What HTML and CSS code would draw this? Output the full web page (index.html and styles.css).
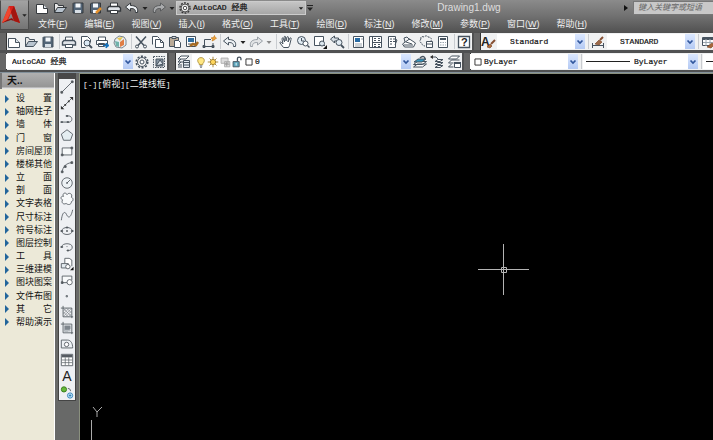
FILE: index.html
```html
<!DOCTYPE html>
<html lang="zh-CN">
<head>
<meta charset="utf-8">
<title>Drawing1.dwg</title>
<link rel="stylesheet" href="styles.css">
</head>
<body>
<svg class="sprite" aria-hidden="true">
  <symbol id="new" viewBox="0 0 16 16"><path d="M2.500 4.500h7l4 4v5h-11z" fill="#fff"/><path d="M9.500 4.500v4h4" fill="#dde3ea"/></symbol>
  <symbol id="open" viewBox="0 0 16 16"><path d="M2.500 12.500v-9h3l1 2h5v2" fill="#e8e8e8"/><path d="M2.500 12.500l3-5h9l-4 5z" fill="#b9c4cf"/></symbol>
  <symbol id="save" viewBox="0 0 16 16"><path d="M3.500 3h9.500v10h-10v-9.500z" fill="#536577"/><path d="M5.500 3.500h5v4h-5z" fill="#f4f7fa" stroke="none"/><path d="M5 10h6v3H5z" fill="#d7dee5" stroke="none"/></symbol>
  <symbol id="saveas" viewBox="0 0 16 16"><path d="M3.500 3h9v10h-10v-9z" fill="#536577"/><path d="M5 3.500h5v4h-5zM5 10h4v3H5z" fill="#f4f7fa" stroke="none"/><path d="M8 13l5-5" stroke="#e4902b" stroke-width="2.500"/></symbol>
  <symbol id="print" viewBox="0 0 16 16"><path d="M4.500 7v-4h7v4M4.500 10v3.500h7V10" fill="#fff"/><path d="M3 6.500h10l1.500 1.500v3h-13v-3z" fill="#dfe3e8" stroke-width="1.400"/><path d="M4.500 10.500h7v3h-7z" fill="#fff"/></symbol>
  <symbol id="preview" viewBox="0 0 16 16"><path d="M3.500 13.500v-11h6l3 3v3M3.500 13.500h4" fill="#fff"/><circle cx="9" cy="9" r="3" fill="#dceaf5"/><path d="M11 11l3 3" stroke-width="2"/></symbol>
  <symbol id="publish" viewBox="0 0 16 16"><path d="M3.500 6v-3h7v3M1.500 6.500h11v4h-11zM3.500 9.500h6v3h-6z" fill="#fff"/><path d="M8 11.500h4m-1-2.500l3 2.500-3 2.500z" fill="#1673bd" stroke="#1673bd"/></symbol>
  <symbol id="cube" viewBox="0 0 16 16"><path d="M7 2l5 1 2 3v5l-4 3-6-1-2-4 1-4z" fill="#e7eef3" stroke="#7b858d"/><path d="M8 8l4-3v6l-4 2z" fill="#df7d45" stroke="none"/><path d="M3 7l4 1v5l-3-1z" fill="#71b2ab" stroke="none"/><path d="M5 4l6-1-3 4z" fill="#e7c54f" stroke="none"/></symbol>
  <symbol id="cut" viewBox="0 0 16 16"><path d="M3 2.500l8 9M13 2.500l-8 9" stroke-width="1.500"/><circle cx="4" cy="12.500" r="1.500"/><circle cx="12" cy="12.500" r="1.500"/></symbol>
  <symbol id="copy" viewBox="0 0 16 16"><path d="M2.500 10.500v-8h5l2 2" fill="#fff"/><path d="M5.500 5.500h5l3 3v5h-8z" fill="#fff"/><path d="M10.500 5.500v3h3"/></symbol>
  <symbol id="paste" viewBox="0 0 16 16"><path d="M2.500 3.500h9v9h-9z" fill="#b9aa97"/><path d="M5 2.500h4v2H5z" fill="#ddd"/><path d="M7.500 6.500h4l2 2v5h-6z" fill="#fff"/></symbol>
  <symbol id="match" viewBox="0 0 16 16"><path d="M2.500 2.500h9v10h-9z" fill="#fff"/><path d="M4 4h6v4H4z" fill="#326f9f" stroke="none"/><path d="M4 10h4"/><path d="M6 12l3-2 3 1 2-3" stroke="#a76b22" stroke-width="2.500"/></symbol>
  <symbol id="block" viewBox="0 0 16 16"><path d="M10 5.500H3.500v6M3 12.500h9V9"/><path d="M11 7l1-2-2-1 2.500-.5 1-2 .5 2 1.500.5-1.500 1.500z" fill="#efa43a" stroke="#c77c1e" stroke-width=".7"/><path d="M2 11.500h2v2H2zM11 11.500h2v2h-2z" fill="#555"/></symbol>
  <symbol id="undo" viewBox="0 0 16 16"><path d="M1.500 7l5-4v2.500c5 0 8 2 7 7h-2c0-3-1-4-5-4V11z" fill="#eef2f5"/></symbol>
  <symbol id="redo" viewBox="0 0 16 16"><path d="M14.500 7l-5-4v2.500c-5 0-8 2-7 7h2c0-3 1-4 5-4V11z" fill="#d5d8dc"/></symbol>
  <symbol id="caret" viewBox="0 0 8 16"><path d="M1.500 7h5L4 10z" fill="currentColor" stroke="none"/></symbol>
  <symbol id="morecaret" viewBox="0 0 8 16"><path d="M1 5h6v1H1zM1 7.500h6L4 11z" fill="currentColor" stroke="none"/></symbol>
  <symbol id="pan" viewBox="0 0 16 16"><path d="M5.500 13.500L2 9c0-2 1-1 3 1L4 5c0-1.500 1-1.500 1.500 0l1 3-.500-5c.5-1 1.500-1 1.500 0L8 7l1-4c1-1 1.500 0 1.500 1L10 8l2-4c1-.5 1.500 0 1 1.500l-1.500 6-1 2z" fill="#fff"/></symbol>
  <symbol id="zoomrt" viewBox="0 0 16 16"><circle cx="6.500" cy="6.500" r="4" fill="#e3edf5"/><path d="M6.500 4v3h2.500"/><circle cx="10.500" cy="9.500" r="2.500" fill="#fff"/><path d="M12.500 11.500l2 2" stroke-width="1.500"/></symbol>
  <symbol id="zoomwin" viewBox="0 0 16 16"><path d="M2.500 2.500h9v9h-9z" fill="#fff"/><circle cx="10" cy="9.500" r="2.500" fill="#dce7ef"/><path d="M12 11l1 1"/><path d="M15 11v4h-4z" fill="#111" stroke="none"/></symbol>
  <symbol id="zoomprev" viewBox="0 0 16 16"><path d="M1.500 5l4-3v2h4v3h-4v2z" fill="#d6dde3"/><circle cx="10" cy="8.500" r="3" fill="#e3edf5"/><path d="M12 11l3 3" stroke-width="1.800"/></symbol>
  <symbol id="props" viewBox="0 0 16 16"><path d="M3.500 2.500h10v11h-10z" fill="#fff"/><path d="M5 4h5v4H5z" fill="#286ba4" stroke="none"/><path d="M11 5h2M5 10h7M5 12h7" stroke="#9aa5ae"/></symbol>
  <symbol id="center" viewBox="0 0 16 16"><path d="M2.500 2.500h12v11h-12z" fill="#fff"/><path d="M5.500 2.500v11M5 8.500h9M7 4.500h2m2 0h2M7 6.500h2m2 0h2M7 10.500h2m2 0h2M7 12.500h2m2 0h2"/></symbol>
  <symbol id="palette" viewBox="0 0 16 16"><path d="M4.500 2.500h7v11h-7z" fill="#fff"/><path d="M6 5h2m1 0h2M6 7.500h2m1 0h2M6 10h2m3-5l2 1-2 5"/></symbol>
  <symbol id="sheet" viewBox="0 0 16 16"><path d="M1.500 10l7-5 6 4-2 4h-9z" fill="#fff"/><path d="M4 8l-1-4 3-1 3 3M3 11h9M5 8l6 2"/></symbol>
  <symbol id="markup" viewBox="0 0 16 16"><path d="M3 5c-1-2 1-3 3-2 2-2 4-1 4 0 3 0 4 2 3 4M3 5c-2 2-1 4 1 4 0 2 1 3 3 3" stroke-dasharray="2 1"/><path d="M8.500 7.500h6v6h-6z" fill="#fff"/><path d="M8 10h6"/></symbol>
  <symbol id="calc" viewBox="0 0 16 16"><path d="M3.500 2.500h9v11h-9z" fill="#fff"/><path d="M5 5h6" stroke-width="2"/><path d="M5 8.500h6M5 11h6" stroke="#9aa5ae" stroke-dasharray="1.500 1"/></symbol>
  <symbol id="help" viewBox="0 0 16 16"><path d="M2.500 2.500h11v11h-11z" fill="#fff" stroke-width="1.300"/><text x="5" y="12" class="qmark">?</text></symbol>
  <symbol id="textstyle" viewBox="0 0 16 16"><text x="1" y="12" class="glyph">A</text><path d="M7 13l3-3 2 2-2 2z" fill="#ad6c3d" stroke="#75401d" stroke-width=".6"/><path d="M11 10l4-4" stroke="#865033" stroke-width="2"/></symbol>
  <symbol id="dimstyle" viewBox="0 0 16 16"><path d="M2.500 9v5m11-5v5M3 11.500h11"/><path d="M5 10l4-4 3 2-3 3z" fill="#9b694a" stroke="#75401d" stroke-width=".6"/><path d="M10 6l3-3" stroke="#865033" stroke-width="2"/></symbol>
  <symbol id="tablestyle" viewBox="0 0 16 16"><path d="M2.500 3.500h11v8h-11z" fill="#fff"/><path d="M3 5h10" stroke-width="2"/><path d="M6 5v7M10 5v7M3 8.500h10" stroke="#9aa5ae"/><path d="M7 13l5-4 2 2-3 3z" fill="#a9663b" stroke="#75401d" stroke-width=".6"/></symbol>
  <symbol id="gear" viewBox="0 0 16 16"><circle cx="8" cy="8" r="5.800" stroke-width="1.500" stroke-dasharray="2.100 1.544"/><circle cx="8" cy="8" r="4.500" fill="#f1f1f1"/><circle cx="8" cy="8" r="2" fill="#fff"/></symbol>
  <symbol id="workspace" viewBox="0 0 16 16"><path d="M2.500 2.500h11v11h-11z" stroke-dasharray="1.500 1"/><path d="M5 5h7v7H5z" fill="#8795a2"/><path d="M5 12l4-6 3 4z" fill="#dce3e9"/></symbol>
  <symbol id="layers" viewBox="0 0 16 16"><path d="M3 5l3-3h8l-3 3zM3 8l3-3M3 8h5M3 11l3-3M3 11h4M3 13h4" fill="#fff"/><path d="M8.500 6.500h6v7h-6z" fill="#e4ebf1"/><path d="M9 8.500h5M9 11h5"/></symbol>
  <symbol id="layerstate" viewBox="0 0 16 16"><path d="M2.500 5l3-3h8l-3 3zM2.500 9l3-3h8M2.500 9h5M2.500 13l3-3M2.500 13h5" fill="#fff"/><path d="M8.500 8.500h6v5h-6z" fill="#fff"/><path d="M8 9h7" stroke-width="2"/></symbol>
  <symbol id="layercur" viewBox="0 0 16 16"><path d="M1.500 13l4-3h9l-4 3zM1.500 10.500l4-3h9l-4 3z" fill="#fff"/><path d="M2 8l4-3h8l-4 3z" fill="#3395bd"/><path d="M8 4c3-3 5-1 5 1" stroke-width="1.500"/></symbol>
  <symbol id="layerprev" viewBox="0 0 16 16"><path d="M6 7.500l3-2h5l-3 2zM6 10.500l3-2h5l-3 2zM6 13.500l3-2h5l-3 2z" fill="#fff"/><path d="M2 3h5l2 2"/><path d="M1 3l3-2v4z" fill="#333" stroke="none"/></symbol>
  <symbol id="bulb" viewBox="0 0 12 16"><path d="M4 10C1 7 2 3 6 3s5 4 2 7v1H4z" fill="#ffe783" stroke="#a98b36"/><path d="M4.500 12.500h3M5 14h2"/></symbol>
  <symbol id="sun" viewBox="0 0 12 16"><path d="M6 2v12M0 8h12M2 4l8 8M10 4l-8 8" stroke="#9d7c2b"/><circle cx="6" cy="8" r="3" fill="#ffd65c" stroke="#9d7c2b"/></symbol>
  <symbol id="vpfreeze" viewBox="0 0 12 16"><path d="M1.500 3.500h8v6h-8zM5.500 7.500h6v6h-6z" fill="#ddd" stroke="#aaa"/><path d="M8 8v5M6 10.500h5" stroke="#999"/></symbol>
  <symbol id="lock" viewBox="0 0 12 16"><path d="M6.500 7V4c0-2 4-2 4 0v2" stroke-width="1.500"/><path d="M1.500 7.500h7v6h-7z" fill="#5da6bc"/><path d="M5 9v3" stroke="#fff"/></symbol>
  <symbol id="swatch" viewBox="0 0 12 16"><path d="M2.500 4.500h7v7h-7z" fill="#fff" stroke="#222"/></symbol>
  <symbol id="chev" viewBox="0 0 10 14"><path d="M2.500 6L5 8.500 7.500 6" stroke="#31579d" stroke-width="1.700"/></symbol>

  <symbol id="line" viewBox="0 0 16 16"><path d="M2 14L14 2"/><path d="M1 13h2v2H1zM13 1h2v2h-2z" fill="#555"/></symbol>
  <symbol id="xline" viewBox="0 0 16 16"><path d="M2 14L14 2"/><path d="M1 15v-4l4 4zM15 1v4l-4-4zM5 9h2v2H5zM9 5h2v2H9z" fill="#333" stroke="none"/></symbol>
  <symbol id="pline" viewBox="0 0 16 16"><path d="M2 11.500h9c4-1 3-7-1-7H8"/><path d="M1 11h2v1H1zM8 11h2v1H8zM7 4h2v1H7z" fill="#555"/></symbol>
  <symbol id="polygon" viewBox="0 0 16 16"><path d="M8 2l6.500 5-2.500 7H4L1.500 7z" fill="#e4edf1"/></symbol>
  <symbol id="rect" viewBox="0 0 16 16"><path d="M2.500 4.500h11v8h-11z" fill="#f7f9fa"/><path d="M1.500 11.500h2v2h-2zM12.500 3.500h2v2h-2z" fill="#555"/></symbol>
  <symbol id="arc" viewBox="0 0 16 16"><path d="M2.500 13.500C3 8 7 3.500 13.500 3"/><path d="M1.500 12.500h2v2h-2zM5 6.500h2v2H5zM12.500 2h2v2h-2z" fill="#555"/></symbol>
  <symbol id="circle" viewBox="0 0 16 16"><circle cx="8" cy="8" r="6" fill="#edf2f5"/><path d="M8 8l4-4M7.500 7.500h1v1h-1z"/></symbol>
  <symbol id="cloud" viewBox="0 0 16 16"><path d="M4 5C2 1 7 0 8 3c2-3 7-1 5 3 3 1 2 5 0 5 0 4-4 4-6 2-3 2-6-1-4-4C0 8 1 4 4 5z" fill="#f8fafb"/></symbol>
  <symbol id="spline" viewBox="0 0 16 16"><path d="M1.500 14C3 3 6 4 7.500 7.500S12 13 14.500 2"/></symbol>
  <symbol id="ellipse" viewBox="0 0 16 16"><ellipse cx="8" cy="8" rx="6" ry="4"/><path d="M1 7.500h2v1H1zM13 7.500h2v1h-2zM7 3.500h2v1H7zM7.500 7.500h1v1h-1z" fill="#555"/></symbol>
  <symbol id="earc" viewBox="0 0 16 16"><path d="M2 8c0-5 12-5 12 0 0 3-2 4-5 4"/><path d="M1 7.500h2v1H1zM8 11.500h2v1H8zM7.500 7.500h1" fill="#555"/></symbol>
  <symbol id="insert" viewBox="0 0 16 16"><path d="M5.500 7V1.500h5l3 2v7" fill="#fff"/><path d="M1.500 7.500h8v5h-8z" fill="#e4ebf0"/><circle cx="9" cy="11" r="2.500" fill="#fff"/><path d="M15.500 11v4h-4z" fill="#111" stroke="none"/></symbol>
  <symbol id="mkblock" viewBox="0 0 16 16"><path d="M2.500 11V3.500h11V8M2.500 11h6" fill="#f8fafb"/><circle cx="11" cy="10.500" r="3" fill="#fff"/><path d="M1.500 10h2v2h-2z" fill="#555"/></symbol>
  <symbol id="point" viewBox="0 0 16 16"><path d="M7 7.500h1.500V9H7z"/></symbol>
  <symbol id="hatch" viewBox="0 0 16 16"><path d="M3.500 1v12.500H15M1 3.500h12.500V15"/><path d="M4 7l3-3M4 10l6-6M4 13l9-9M7 13l6-6M10 13l3-3M4 4l9 9M4 8l5 5M8 4l5 5" stroke-width=".5"/></symbol>
  <symbol id="gradient" viewBox="0 0 16 16"><path d="M3.500 1v12.500H15M1 3.500h12.500V15"/><path d="M5 5h7v4l-3 3H5z" fill="#7e868d" stroke="none"/><path d="M5 10h7v2H5z" fill="#b9bfc4" stroke="none"/></symbol>
  <symbol id="region" viewBox="0 0 16 16"><path d="M1.500 3.500h7c4 0 6 4 6 9h-13z" fill="#edf1f4"/><circle cx="7.500" cy="8.500" r="2.500" fill="#fff"/></symbol>
  <symbol id="table" viewBox="0 0 16 16"><path d="M1.500 1.500h13v13h-13z" fill="#fff"/><path d="M2 3.500h12" stroke-width="3"/><path d="M6 5v9M10 5v9M2 8h12M2 11h12" stroke-width=".8"/></symbol>
  <symbol id="mtext" viewBox="0 0 16 16"><text x="2.500" y="14" class="big">A</text></symbol>
  <symbol id="addsel" viewBox="0 0 16 16"><circle cx="4.500" cy="5" r="3" fill="#65b83a" stroke="#35771d"/><path d="M9 4c2 0 3 1 3 3"/><circle cx="11.500" cy="12" r="3" fill="#c8e5f8" stroke="#277eb8"/><path d="M10 12h3M11.500 10.500v3" stroke="#277eb8"/></symbol>
</svg>

<header class="header">
  <button class="app" aria-label="应用程序菜单">
    <svg class="logo" viewBox="0 0 20 24"><path d="M8 3h5l6 17-6-2-3-8-3 7-6 3z" fill="#d9201a"/><path d="M8 3l2 6-4 8-5 3z" fill="#f0472f"/><path d="M13 3l6 17-6-2-3-9z" fill="#a3160f"/><path d="M6 17l5-2 2 3-3-1-9 3z" fill="#8f0f0b"/></svg>
    <svg class="caret"><use href="#caret"/></svg>
  </button>
  <div class="head-main">
    <div class="title-row">
      <div class="quick">
        <button aria-label="新建"><svg><use href="#new"/></svg></button>
        <button aria-label="打开"><svg><use href="#open"/></svg></button>
        <button aria-label="保存"><svg><use href="#save"/></svg></button>
        <button aria-label="另存为"><svg><use href="#saveas"/></svg></button>
        <button aria-label="打印"><svg><use href="#print"/></svg></button>
        <button aria-label="放弃"><svg><use href="#undo"/></svg></button>
        <button class="drop" aria-label="放弃列表"><svg><use href="#caret"/></svg></button>
        <button class="dim" aria-label="重做"><svg><use href="#redo"/></svg></button>
        <button class="drop" aria-label="重做列表"><svg><use href="#caret"/></svg></button>
      </div>
      <div class="combo space">
        <svg><use href="#gear"/></svg>
        <select aria-label="工作空间"><option>AutoCAD 经典</option></select>
        <svg class="caret"><use href="#caret"/></svg>
      </div>
      <button class="drop" aria-label="自定义快速访问工具栏"><svg><use href="#morecaret"/></svg></button>
      <h1>Drawing1.dwg</h1>
      <span class="play"></span>
      <input class="search" type="search" aria-label="搜索" placeholder="键入关键字或短语">
    </div>
    <nav class="menu">
      <a href="#">文件(<u>F</u>)</a><a href="#">编辑(<u>E</u>)</a><a href="#">视图(<u>V</u>)</a><a href="#">插入(<u>I</u>)</a><a href="#">格式(<u>O</u>)</a><a href="#">工具(<u>T</u>)</a><a href="#">绘图(<u>D</u>)</a><a href="#">标注(<u>N</u>)</a><a href="#">修改(<u>M</u>)</a><a href="#">参数(<u>P</u>)</a><a href="#">窗口(<u>W</u>)</a><a href="#">帮助(<u>H</u>)</a>
    </nav>
  </div>
</header>

<div class="bars">
  <div class="bar-row">
    <div class="bar">
      <button aria-label="新建"><svg><use href="#new"/></svg></button>
      <button aria-label="打开"><svg><use href="#open"/></svg></button>
      <button aria-label="保存"><svg><use href="#save"/></svg></button>
      <i class="sep"></i>
      <button aria-label="打印"><svg><use href="#print"/></svg></button>
      <button aria-label="打印预览"><svg><use href="#preview"/></svg></button>
      <button aria-label="发布"><svg><use href="#publish"/></svg></button>
      <button aria-label="三维打印"><svg><use href="#cube"/></svg></button>
      <i class="sep"></i>
      <button aria-label="剪切"><svg><use href="#cut"/></svg></button>
      <button aria-label="复制"><svg><use href="#copy"/></svg></button>
      <button aria-label="粘贴"><svg><use href="#paste"/></svg></button>
      <button aria-label="特性匹配"><svg><use href="#match"/></svg></button>
      <button aria-label="块编辑器"><svg><use href="#block"/></svg></button>
      <i class="sep"></i>
      <button aria-label="放弃"><svg><use href="#undo"/></svg></button>
      <button class="drop" aria-label="放弃列表"><svg><use href="#caret"/></svg></button>
      <button class="dim" aria-label="重做"><svg><use href="#redo"/></svg></button>
      <button class="drop dim" aria-label="重做列表"><svg><use href="#caret"/></svg></button>
      <i class="sep"></i>
      <button aria-label="平移"><svg><use href="#pan"/></svg></button>
      <button aria-label="实时缩放"><svg><use href="#zoomrt"/></svg></button>
      <button aria-label="窗口缩放"><svg><use href="#zoomwin"/></svg></button>
      <button aria-label="缩放上一个"><svg><use href="#zoomprev"/></svg></button>
      <i class="sep"></i>
      <button aria-label="特性"><svg><use href="#props"/></svg></button>
      <button aria-label="设计中心"><svg><use href="#center"/></svg></button>
      <button aria-label="工具选项板"><svg><use href="#palette"/></svg></button>
      <button aria-label="图纸集"><svg><use href="#sheet"/></svg></button>
      <button aria-label="标记集"><svg><use href="#markup"/></svg></button>
      <button aria-label="计算器"><svg><use href="#calc"/></svg></button>
      <i class="sep"></i>
      <button aria-label="帮助"><svg><use href="#help"/></svg></button>
    </div>
    <div class="bar fill">
      <button aria-label="文字样式"><svg><use href="#textstyle"/></svg></button>
      <div class="combo style"><select aria-label="文字样式"><option>Standard</option></select><svg class="arrow"><use href="#chev"/></svg></div>
      <i class="sep"></i>
      <button aria-label="标注样式"><svg><use href="#dimstyle"/></svg></button>
      <div class="combo style"><select aria-label="标注样式"><option>STANDARD</option></select><svg class="arrow"><use href="#chev"/></svg></div>
      <i class="sep"></i>
      <button aria-label="表格样式"><svg><use href="#tablestyle"/></svg></button>
    </div>
  </div>
  <div class="bar-row">
    <div class="bar">
      <div class="combo workspace"><select aria-label="工作空间"><option>AutoCAD 经典</option></select><svg class="arrow"><use href="#chev"/></svg></div>
      <button aria-label="工作空间设置"><svg><use href="#gear"/></svg></button>
      <button aria-label="我的工作空间"><svg><use href="#workspace"/></svg></button>
    </div>
    <div class="bar">
      <button aria-label="图层特性"><svg><use href="#layers"/></svg></button>
      <div class="combo layer">
        <svg class="mini"><use href="#bulb"/></svg><svg class="mini"><use href="#sun"/></svg><svg class="mini"><use href="#vpfreeze"/></svg><svg class="mini"><use href="#lock"/></svg><svg class="mini"><use href="#swatch"/></svg>
        <select aria-label="图层"><option>0</option></select><svg class="arrow"><use href="#chev"/></svg>
      </div>
      <button aria-label="置为当前图层"><svg><use href="#layercur"/></svg></button>
      <button aria-label="上一个图层"><svg><use href="#layerprev"/></svg></button>
      <button aria-label="图层状态"><svg><use href="#layerstate"/></svg></button>
    </div>
    <div class="bar fill">
      <div class="combo color"><svg class="mini"><use href="#swatch"/></svg><select aria-label="颜色"><option>ByLayer</option></select><svg class="arrow"><use href="#chev"/></svg></div>
      <i class="sep"></i>
      <div class="combo ltype"><span class="rule"></span><select aria-label="线型"><option>ByLayer</option></select><svg class="arrow"><use href="#chev"/></svg></div>
      <i class="sep"></i>
      <div class="combo weight"><span class="rule"></span></div>
    </div>
  </div>
</div>

<main class="work">
  <aside class="side">
    <h2>天..</h2>
    <ul>
      <li><a href="#">设 置</a></li><li><a href="#">轴网柱子</a></li><li><a href="#">墙 体</a></li><li><a href="#">门 窗</a></li><li><a href="#">房间屋顶</a></li><li><a href="#">楼梯其他</a></li><li><a href="#">立 面</a></li><li><a href="#">剖 面</a></li><li><a href="#">文字表格</a></li><li><a href="#">尺寸标注</a></li><li><a href="#">符号标注</a></li><li><a href="#">图层控制</a></li><li><a href="#">工 具</a></li><li><a href="#">三维建模</a></li><li><a href="#">图块图案</a></li><li><a href="#">文件布图</a></li><li><a href="#">其 它</a></li><li><a href="#">帮助演示</a></li>
    </ul>
  </aside>
  <div class="dock">
    <div class="draw">
      <button aria-label="直线"><svg><use href="#line"/></svg></button>
      <button aria-label="构造线"><svg><use href="#xline"/></svg></button>
      <button aria-label="多段线"><svg><use href="#pline"/></svg></button>
      <button aria-label="正多边形"><svg><use href="#polygon"/></svg></button>
      <button aria-label="矩形"><svg><use href="#rect"/></svg></button>
      <button aria-label="圆弧"><svg><use href="#arc"/></svg></button>
      <button aria-label="圆"><svg><use href="#circle"/></svg></button>
      <button aria-label="修订云线"><svg><use href="#cloud"/></svg></button>
      <button aria-label="样条曲线"><svg><use href="#spline"/></svg></button>
      <button aria-label="椭圆"><svg><use href="#ellipse"/></svg></button>
      <button aria-label="椭圆弧"><svg><use href="#earc"/></svg></button>
      <button aria-label="插入块"><svg><use href="#insert"/></svg></button>
      <button aria-label="创建块"><svg><use href="#mkblock"/></svg></button>
      <button aria-label="点"><svg><use href="#point"/></svg></button>
      <button aria-label="图案填充"><svg><use href="#hatch"/></svg></button>
      <button aria-label="渐变色"><svg><use href="#gradient"/></svg></button>
      <button aria-label="面域"><svg><use href="#region"/></svg></button>
      <button aria-label="表格"><svg><use href="#table"/></svg></button>
      <button aria-label="多行文字"><svg><use href="#mtext"/></svg></button>
      <button aria-label="添加选定对象"><svg><use href="#addsel"/></svg></button>
    </div>
  </div>
  <section class="canvas" aria-label="绘图区">
    <p class="view">[-][<span>俯视</span>][<span>二维线框</span>]</p>
    <svg class="cross" viewBox="0 0 51 51"><path d="M25.500 0v51M0 25.500h51"/><path d="M23.500 23.500h5v5h-5z"/></svg>
    <svg class="ucs" viewBox="0 0 14 36"><path d="M3 3l4 5 5-5M7 8v5M1.500 16v20"/></svg>
  </section>
</main>
</body>
</html>
```
FILE: styles.css
```css
* { box-sizing: border-box; }
html, body { height: 100%; }
body {
  margin: 0;
  display: flex;
  flex-direction: column;
  min-height: 100vh;
  overflow: hidden;
  background: #58595a;
  font-family: "Liberation Sans", "Noto Sans CJK SC", sans-serif;
  font-size: 9px;
}
.sprite { display: none; }
svg { display: block; flex: none; width: 16px; height: 16px; fill: none; stroke: #46525e; stroke-width: 1; }
.glyph { font: bold 12px "Liberation Sans", sans-serif; fill: #222; stroke: none; }
.qmark { font: bold 11px "Liberation Sans", sans-serif; fill: #222; stroke: none; }
.big { font: 16px "Liberation Sans", sans-serif; fill: #222; stroke: none; }
button { flex: none; display: flex; align-items: center; justify-content: center; width: 16px; height: 16px; margin: 0; padding: 0; border: 0; background: none; color: #222; }
.drop { width: 8px; }
.drop svg, svg.caret { width: 8px; color: #222; }
.dim { opacity: .5; }

.header { display: flex; height: 33px; background: linear-gradient(#8b8b8b, #707070 50%, #505050); }
.app { width: 29px; height: 30px; border: 1px solid #4b4b4b; border-top-color: #999; border-radius: 0 0 2px 0; background: linear-gradient(#a2a2a2, #747474); }
.logo { width: 20px; height: 24px; stroke: none; }
.app .caret { width: 7px; }
.head-main { flex: 1; min-width: 0; }
.title-row { display: flex; align-items: center; height: 15px; }
.quick { display: flex; gap: 1px; padding-left: 4px; }
.quick button { width: 17px; }
.quick .drop { width: 8px; }
.quick svg { stroke: #35393d; }
.combo { display: flex; align-items: center; height: 15px; background: #fff; color: #111; }
.combo select { flex: 1; min-width: 0; height: 14px; padding: 0; border: 0; outline: 0; appearance: none; background: transparent; color: inherit; font: 8px "Liberation Mono", "Noto Sans CJK SC", monospace; -webkit-text-stroke: .2px; }
.space { width: 130px; height: 14px; background: linear-gradient(#c5c5c5, #a6a6a6); border: 1px solid #ccc; }
.space svg { height: 14px; stroke: #333; }
h1 { flex: 1; margin: 0; text-align: center; font-size: 10px; font-weight: normal; line-height: 14px; color: #dedede; }
.play { border: 3px solid transparent; border-left: 4px solid #111; border-right: 0; margin-right: 5px; }
.search { width: 80px; height: 14px; padding: 0 0 0 4px; border: 1px solid #777; border-right: 0; border-radius: 0; background: #c8c8c8; font: italic 8px "Liberation Sans", "Noto Sans CJK SC", sans-serif; appearance: none; }
.search::placeholder { color: #666; opacity: 1; }
.menu { display: flex; gap: 17px; padding-left: 9px; line-height: 18px; }
.menu a { color: #f0f0f0; text-decoration: none; white-space: nowrap; }

.bars { display: flex; flex-direction: column; gap: 3px; padding-bottom: 2px; background: #505152; border-bottom: 1px solid #83919b; }
.bar-row { display: flex; height: 17px; overflow: hidden; gap: 2px; }
.bar { display: flex; align-items: center; flex: none; gap: 1px; border-left: 6px solid #666; background: #f0f1f2; box-shadow: inset 1px 0 #333; }
.fill { flex: 1 0 auto; }
.sep { width: 3px; height: 15px; border-right: 1px solid #c9ccd0; }
.arrow { width: 10px; height: 15px; background: linear-gradient(#dce8ff, #b3c9f3); }
.style { width: 88px; padding-left: 13px; }
.workspace { width: 127px; padding-left: 6px; }
.layer { width: 219px; padding-left: 3px; }
.mini { width: 12px; height: 14px; }
.color { width: 108px; padding-left: 2px; }
.ltype { width: 115px; padding-left: 3px; gap: 4px; }
.rule { width: 44px; border-top: 1px solid #222; }
.weight { width: 60px; padding-left: 3px; }

.work { flex: 1; display: flex; min-height: 0; }
.side { width: 55px; background: #ece9d8; border-right: 1px solid #fff; }
.side h2 { margin: 0; padding-left: 7px; height: 16px; line-height: 15px; font-size: 10px; font-weight: bold; color: #111; background: linear-gradient(#b0b0b0, #969696 85%, #f5f5f5); box-shadow: inset 2px 0 #777; }
.side ul { display: grid; grid-auto-rows: 1fr; height: 237px; margin: 3px 0 0; padding: 0 0 0 5px; list-style: none; }
.side li { display: flex; align-items: center; gap: 7px; }
.side li::before { content: ""; border: 4px solid transparent; border-left-color: #22659b; border-right: 0; }
.side a { width: 36px; color: #111; text-decoration: none; text-align-last: justify; line-height: 13px; }
.dock { width: 24px; padding: 0 0 0 3px; background: #686968; }
.draw { display: grid; grid-auto-rows: 1fr; width: 18px; height: 328px; border: 1px solid #444; border-top: 6px solid #484848; background: #eef0f3; }
.draw svg { width: 14px; height: 14px; stroke: #555b62; }
.canvas { position: relative; flex: 1; border: 1px solid #8a907e; border-width: 1px 0 0 1px; background: #000; }
.view { margin: 0; padding: 3px 0 0 3px; color: #f2f2f2; font: 8px/13px "Liberation Mono", monospace; }
.view span { font: 9px/13px "Noto Sans CJK SC", sans-serif; }
.cross { position: absolute; left: 398px; top: 170px; width: 51px; height: 51px; stroke: #b4b4b4; }
.ucs { position: absolute; left: 10px; bottom: 0; width: 14px; height: 36px; stroke: #aaa; }
```
